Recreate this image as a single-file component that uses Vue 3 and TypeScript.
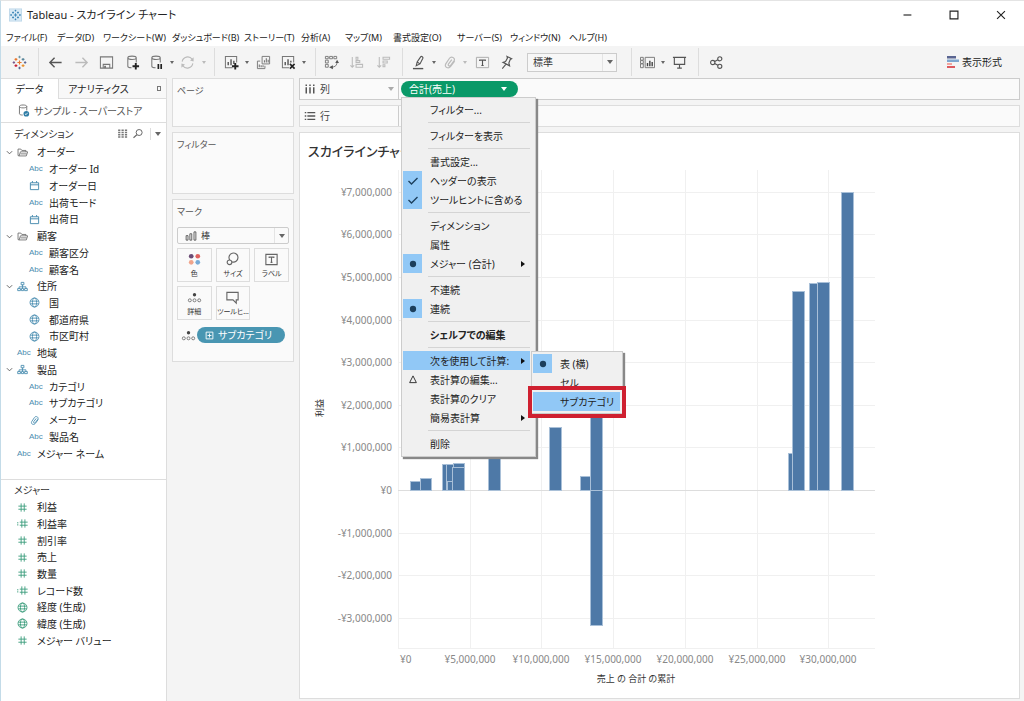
<script setup lang="ts">
import { ref } from 'vue'

interface Field { icon: string; label: string; level: number; open?: boolean }
interface MenuRow { label?: string; sep?: boolean; mark?: string; arrow?: boolean; strong?: boolean; sub?: boolean }
interface Tool { kind: 'btn' | 'caret' | 'div' | 'fit'; icon?: string; label?: string; dim?: boolean }
interface Bar { x: number; w: number; v: number }

const menus = ['ファイル(F)', 'データ(D)', 'ワークシート(W)', 'ダッシュボード(B)', 'ストーリー(T)', '分析(A)', 'マップ(M)', '書式設定(O)', 'サーバー(S)', 'ウィンドウ(N)', 'ヘルプ(H)']

const tools: Tool[] = [
  { kind: 'btn', icon: 'logo', label: 'スタートページ' },
  { kind: 'div' },
  { kind: 'btn', icon: 'back', label: '元に戻す' },
  { kind: 'btn', icon: 'forward', label: 'やり直し', dim: true },
  { kind: 'btn', icon: 'save', label: '保存' },
  { kind: 'btn', icon: 'dbadd', label: '新しいデータソース' },
  { kind: 'btn', icon: 'dbpause', label: '自動更新の一時停止' },
  { kind: 'caret' },
  { kind: 'btn', icon: 'refresh', label: '更新の実行', dim: true },
  { kind: 'caret', dim: true },
  { kind: 'div' },
  { kind: 'btn', icon: 'sheetadd', label: '新しいワークシート' },
  { kind: 'caret' },
  { kind: 'btn', icon: 'copy', label: '複製' },
  { kind: 'btn', icon: 'sheetclear', label: 'シートのクリア' },
  { kind: 'caret' },
  { kind: 'div' },
  { kind: 'btn', icon: 'swap', label: '行と列の交換' },
  { kind: 'btn', icon: 'asc', label: '昇順', dim: true },
  { kind: 'btn', icon: 'desc', label: '降順', dim: true },
  { kind: 'div' },
  { kind: 'btn', icon: 'pen', label: 'ハイライト' },
  { kind: 'caret' },
  { kind: 'btn', icon: 'clip', label: 'グループ', dim: true },
  { kind: 'caret', dim: true },
  { kind: 'btn', icon: 'text', label: 'マークラベル' },
  { kind: 'btn', icon: 'pin', label: '軸の固定' },
  { kind: 'fit' },
  { kind: 'div' },
  { kind: 'btn', icon: 'cards', label: 'カードの表示' },
  { kind: 'caret' },
  { kind: 'btn', icon: 'present', label: 'プレゼンテーション' },
  { kind: 'div' },
  { kind: 'btn', icon: 'share', label: '共有' },
]

const dimensions: Field[] = [
  { icon: 'folder', label: 'オーダー', level: 0, open: true },
  { icon: 'abc', label: 'オーダー Id', level: 1 },
  { icon: 'date', label: 'オーダー日', level: 1 },
  { icon: 'abc', label: '出荷モード', level: 1 },
  { icon: 'date', label: '出荷日', level: 1 },
  { icon: 'folder', label: '顧客', level: 0, open: true },
  { icon: 'abc', label: '顧客区分', level: 1 },
  { icon: 'abc', label: '顧客名', level: 1 },
  { icon: 'tree', label: '住所', level: 0, open: true },
  { icon: 'globe', label: '国', level: 1 },
  { icon: 'globe', label: '都道府県', level: 1 },
  { icon: 'globe', label: '市区町村', level: 1 },
  { icon: 'abc', label: '地域', level: 0 },
  { icon: 'tree', label: '製品', level: 0, open: true },
  { icon: 'abc', label: 'カテゴリ', level: 1 },
  { icon: 'abc', label: 'サブカテゴリ', level: 1 },
  { icon: 'clip', label: 'メーカー', level: 1 },
  { icon: 'abc', label: '製品名', level: 1 },
  { icon: 'abc', label: 'メジャー ネーム', level: 0 },
]

const measures: Field[] = [
  { icon: 'hash', label: '利益', level: 0 },
  { icon: 'calc', label: '利益率', level: 0 },
  { icon: 'hash', label: '割引率', level: 0 },
  { icon: 'hash', label: '売上', level: 0 },
  { icon: 'hash', label: '数量', level: 0 },
  { icon: 'calc', label: 'レコード数', level: 0 },
  { icon: 'globe', label: '経度 (生成)', level: 0 },
  { icon: 'globe', label: '緯度 (生成)', level: 0 },
  { icon: 'hash', label: 'メジャー バリュー', level: 0 },
]

const markButtons = [
  { icon: 'color', label: '色' },
  { icon: 'size', label: 'サイズ' },
  { icon: 'label', label: 'ラベル' },
  { icon: 'detail', label: '詳細' },
  { icon: 'tip', label: 'ツールヒ…' },
]

const rows: MenuRow[] = [
  { label: 'フィルター...' }, { sep: true },
  { label: 'フィルターを表示' }, { sep: true },
  { label: '書式設定...' },
  { label: 'ヘッダーの表示', mark: 'check' },
  { label: 'ツールヒントに含める', mark: 'check' }, { sep: true },
  { label: 'ディメンション' },
  { label: '属性' },
  { label: 'メジャー (合計)', mark: 'dot', arrow: true }, { sep: true },
  { label: '不連続' },
  { label: '連続', mark: 'dot' }, { sep: true },
  { label: 'シェルフでの編集', strong: true }, { sep: true },
  { label: '次を使用して計算:', arrow: true, sub: true },
  { label: '表計算の編集...', mark: 'delta' },
  { label: '表計算のクリア' },
  { label: '簡易表計算', arrow: true }, { sep: true },
  { label: '削除' },
]

const fit = ref('標準')
const markType = ref('棒')

/* Chart scale: sales and profit in millions of yen */
const left = 90
const zero = 326
const perX = 14.34
const perY = 42.6
const px = (m: number) => Math.round(left + m * perX)
const py = (m: number) => Math.round(zero - m * perY)
const yen = (m: number) => (m < 0 ? '-' : '') + '¥' + (m === 0 ? '0' : Math.abs(m) + ',000,000')
const xTicks = [0, 5, 10, 15, 20, 25, 30]
const yTicks = [7, 6, 5, 4, 3, 2, 1, 0, -1, -2, -3]
const bars: Bar[] = [
  { x: 0.87, w: 0.8, v: 0.22 },
  { x: 1.5, w: 0.8, v: 0.28 },
  { x: 3.05, w: 0.8, v: 0.61 },
  { x: 3.35, w: 0.8, v: 0.61 },
  { x: 3.83, w: 0.8, v: 0.64 },
  { x: 3.41, w: 0.8, v: 0.22 },
  { x: 3.75, w: 0.84, v: 0.53 },
  { x: 6.27, w: 0.84, v: 1.2 },
  { x: 10.5, w: 0.84, v: 1.49 },
  { x: 12.7, w: 0.8, v: 0.34 },
  { x: 13.36, w: 0.84, v: 1.85 },
  { x: 13.42, w: 0.84, v: -3.18 },
  { x: 27.22, w: 0.8, v: 0.86 },
  { x: 27.45, w: 0.84, v: 4.67 },
  { x: 28.66, w: 0.84, v: 4.86 },
  { x: 29.22, w: 0.84, v: 4.89 },
  { x: 30.9, w: 0.84, v: 7 },
]
</script>

<template>
  <div class="app">
    <svg class="defs" aria-hidden="true">
      <symbol id="i-logo" viewBox="0 0 16 16">
        <g fill="none" stroke-width="1.2">
          <path stroke="#e8762c" d="M8 5.8v4.4M5.8 8h4.4" />
          <path stroke="#c72037" d="M4.2 9.8v3M2.7 11.3h3" />
          <path stroke="#eb912c" d="M11.8 9.8v3M10.3 11.3h3" />
          <path stroke="#59879b" d="M11.8 3.2v3M10.3 4.7h3" />
          <path stroke="#e8762c" d="M4.2 3.2v3M2.7 4.7h3" />
          <path stroke="#7099a6" d="M8 .8v2.6M6.7 2.1h2.6" />
          <path stroke="#5b6591" d="M8 12.6v2.6M6.7 13.9h2.6M14 6.7v2.6M12.7 8h2.6" />
          <path stroke="#7b5a8c" d="M2 6.7v2.6M.7 8h2.6" />
        </g>
      </symbol>
      <symbol id="i-app" viewBox="0 0 16 16">
        <rect x=".5" y=".5" width="15" height="15" fill="#d9eaf5" stroke="#b9d5e8" />
        <path stroke="#3f88b8" stroke-width="1.2" d="M8 6v4M6 8h4M5 9.8v2.4M3.8 11h2.4M11 9.8v2.4M9.8 11h2.4M11 3.8v2.4M9.8 5h2.4M5 3.8v2.4M3.8 5h2.4M8 1.6v2M7 2.6h2M8 12.4v2M7 13.4h2M13.4 7v2M12.4 8h2M2.6 7v2M1.6 8h2" />
      </symbol>
      <symbol id="i-back" viewBox="0 0 16 16"><path fill="none" stroke="#555" stroke-width="1.5" d="M14.5 8H2M7 3 2 8l5 5" /></symbol>
      <symbol id="i-forward" viewBox="0 0 16 16"><path fill="none" stroke="currentColor" stroke-width="1.5" d="M1.5 8H14M9 3l5 5-5 5" /></symbol>
      <symbol id="i-save" viewBox="0 0 16 16"><path fill="none" stroke="currentColor" stroke-width="1.1" d="M1.5 2h13v12h-13zM4.500 14v-4h7v4" /><path fill="currentColor" d="M5.500 11.500h2V14h-2z" /></symbol>
      <symbol id="i-dbadd" viewBox="0 0 16 16"><path fill="none" stroke="currentColor" stroke-width="1.1" d="M3 3v9c0 1 1.800 1.600 4 1.600M3 3c0-1 1.800-1.800 4.500-1.800S12 2 12 3s-1.800 1.800-4.500 1.800S3 4 3 3M12 3v5" /><path stroke="#222" stroke-width="2" d="M11.500 8.500v7M8 12h7" /></symbol>
      <symbol id="i-dbpause" viewBox="0 0 16 16"><path fill="none" stroke="currentColor" stroke-width="1.1" d="M3 3v9c0 1 1.800 1.600 4 1.600M3 3c0-1 1.800-1.800 4.500-1.800S12 2 12 3s-1.800 1.800-4.500 1.800S3 4 3 3M12 3v5" /><path stroke="#222" stroke-width="1.8" d="M10 9.500V15M13 9.500V15" /></symbol>
      <symbol id="i-refresh" viewBox="0 0 16 16"><path fill="none" stroke="currentColor" stroke-width="1.2" d="M2.300 7A6 6 0 0 1 13 4.500M13.700 9A6 6 0 0 1 3 11.500" /><path fill="currentColor" d="M14.500 2.500V7l-3.800-1.200zM1.500 13.500V9l3.800 1.200z" /></symbol>
      <symbol id="i-sheetadd" viewBox="0 0 16 16"><path fill="none" stroke="currentColor" stroke-width="1.1" d="M9 13.500H1.500v-12h12V8" /><path stroke="#555" stroke-width="1.5" d="M4.500 11V7.500M7.500 11V4.500M10.500 9.500V6" /><path stroke="#222" stroke-width="2" d="M12 8.500v7M8.500 12h7" /></symbol>
      <symbol id="i-copy" viewBox="0 0 16 16"><path fill="none" stroke="currentColor" d="M6.500 1.500h8v8h-8zM4.500 6.500h-3v8h8v-3" /><path stroke="currentColor" stroke-width="1.2" d="M9 8V5.500M11 8V3.500M13 8V5M3.500 13v-3M5.500 13v-2M7.500 13v-2" /></symbol>
      <symbol id="i-sheetclear" viewBox="0 0 16 16"><path fill="none" stroke="currentColor" stroke-width="1.1" d="M8.500 13.500h-7v-12h12V8" /><path stroke="#555" stroke-width="1.5" d="M4.500 11V7.500M7.500 11V4.500M10.500 8V6" /><path stroke="#222" stroke-width="1.8" d="m9.500 9.500 5 5M14.500 9.500l-5 5" /></symbol>
      <symbol id="i-swap" viewBox="0 0 16 16"><path fill="none" stroke="currentColor" d="M1.500 1.500h3v2.500h-3zM6 1.500h3v2.500H6zM10.500 1.500h3v2.500h-3zM1.500 5.500h3v3h-3zM1.500 10h3v3h-3zM14 7c0 4-2 6-6 6" /><path fill="#555" d="M14 5 16 8.500h-4zM5.500 13l4-2.200v4.400z" /></symbol>
      <symbol id="i-asc" viewBox="0 0 16 16"><path fill="none" stroke="currentColor" stroke-width="1.1" d="M3.500 2v11M1.500 11l2 2 2-2M7.500 2.500h2v2h-2zM7.500 6h4v2h-4zM7.500 10h7v3h-7z" /></symbol>
      <symbol id="i-desc" viewBox="0 0 16 16"><path fill="none" stroke="currentColor" stroke-width="1.1" d="M3.500 2v11M1.500 11l2 2 2-2M7.500 2.500h7v2h-7zM7.500 6.500H12v2H7.500zM7.500 10.500h2v2h-2z" /></symbol>
      <symbol id="i-pen" viewBox="0 0 16 16"><path fill="none" stroke="#555" stroke-width="1.2" d="M4.500 11.500 5.500 7.500l3.700-5.500c.9-1.200 3 .1 2.400 1.500L8.500 9.500zM5.500 7.500l3 2" /><path stroke="#555" stroke-width="1.5" d="M1 14.500h11" /></symbol>
      <symbol id="i-clip" viewBox="0 0 16 16"><path fill="none" stroke="currentColor" stroke-width="1.3" d="M13.500 6.500 9 12.500c-2 2.500-7 .8-5-3L8 3.500c1.800-2.700 6.500-.5 5 2.500L9 11.200c-1.200 1.300-3 0-2.200-1.500L10.500 5" /></symbol>
      <symbol id="i-text" viewBox="0 0 16 16"><path fill="none" stroke="#aaa" d="M1.500 2.500h13v11h-13z" /><path fill="none" stroke="#555" stroke-width="1.2" d="M5 6.500v-1h6v1M8 5.500v6M6.800 11.200h2.400" /></symbol>
      <symbol id="i-pin" viewBox="0 0 16 16"><path fill="none" stroke="#555" stroke-width="1.2" d="m8.500 1.500 5 2.500-1.500.8-1.500 3.700.8 3-7-3.700L7 7l2-3.700zM7.500 9.800 3.500 14.500" /></symbol>
      <symbol id="i-cards" viewBox="0 0 16 16"><path fill="none" stroke="currentColor" d="M.5 2.500h3v3h-3zM.5 6h3v3h-3zM.5 9.500h3v4h-3zM5.500 2.500h10v11h-10z" /><path stroke="#444" stroke-width="1.5" d="M8 12V8.500M10.500 12V6M13 12V7.500" /></symbol>
      <symbol id="i-present" viewBox="0 0 16 16"><path fill="none" stroke="#555" stroke-width="1.2" d="M1 2.500h14M2.500 3v7h11V3M8 10v4M5.500 14h5" /></symbol>
      <symbol id="i-share" viewBox="0 0 16 16"><g fill="none" stroke="#555" stroke-width="1.2"><circle cx="4" cy="8" r="2.300" /><circle cx="11.500" cy="4" r="2.200" /><circle cx="11.500" cy="12" r="2.200" /><path d="m6 7 3.500-2M6 9l3.500 2" /></g></symbol>
      <symbol id="i-showme" viewBox="0 0 16 16"><path fill="#5a6591" d="M2 2h9v2.500H2z" /><path fill="#7fa6cf" d="M2 5.500h12V8H2z" /><path fill="#f3a6a0" d="M2 9h5v2H2z" /><path fill="#dd5a5f" d="M2 12h8v2H2z" /></symbol>
      <symbol id="i-source" viewBox="0 0 16 16"><path fill="none" stroke="#777" stroke-width="1.2" d="M3 3v9c0 1 1.800 1.600 4 1.600M3 3c0-1 1.800-1.800 4.500-1.800S12 2 12 3s-1.800 1.800-4.500 1.800S3 4 3 3M12 3v5" /><circle cx="11.500" cy="12" r="3.500" fill="#2f7da6" /><path fill="none" stroke="#fff" d="m9.800 12 1.300 1.200 2-2.400" /></symbol>
      <symbol id="i-grid" viewBox="0 0 16 16"><path fill="none" stroke="#777" stroke-width="1.8" stroke-dasharray="3 1.5" d="M1.500 3H15M1.500 6H15M1.500 9H15M1.500 12H15" /></symbol>
      <symbol id="i-find" viewBox="0 0 16 16"><circle cx="9.500" cy="6" r="4" fill="none" stroke="#666" stroke-width="1.3" /><path stroke="#666" stroke-width="1.5" d="m6.500 9-4.500 4" /></symbol>
      <symbol id="i-folder" viewBox="0 0 16 16"><path fill="none" stroke="#666" stroke-width="1.2" d="M3 13 1.500 12.500V3h4L7 5h6v2M3 13l2-6h10.500l-2 6zM5 10h9" /></symbol>
      <symbol id="i-date" viewBox="0 0 16 16"><path fill="none" stroke="currentColor" stroke-width="1.4" d="M2 4h12v10H2zM2 7h12M5 1.500V4M11 1.500V4" /></symbol>
      <symbol id="i-tree" viewBox="0 0 16 16"><path fill="none" stroke="currentColor" stroke-width="1.3" d="M6 2h4v3.500H6zM1 11h4v3H1zM6.500 11h3v3h-3zM11 11h4v3h-4zM8 5.500V11M3 11V8.500h10V11" /></symbol>
      <symbol id="i-globe" viewBox="0 0 16 16"><g fill="none" stroke="currentColor" stroke-width="1.3"><circle cx="8" cy="8" r="6.500" /><ellipse cx="8" cy="8" rx="3" ry="6.500" /><path d="M2 6h12M2 10h12" /></g></symbol>
      <symbol id="i-hash" viewBox="0 0 16 16"><path fill="none" stroke="currentColor" stroke-width="1.3" d="M6 2v12M10.500 2v12M2 6h12M2 10.500h12" /></symbol>
      <symbol id="i-calc" viewBox="0 0 16 16"><path fill="none" stroke="currentColor" stroke-width="1.3" d="M7 2v12M11.500 2v12M4 6h11.500M4 10.500h11.500M0 7h2M0 10h2" /></symbol>
      <symbol id="i-color" viewBox="0 0 16 16"><circle cx="4.500" cy="4.500" r="2.500" fill="#6b4c75" /><circle cx="11.500" cy="4.500" r="2.500" fill="#e0625f" /><circle cx="4.500" cy="11" r="2.500" fill="#f0a48b" /><circle cx="11.500" cy="11" r="2.500" fill="#79abd6" /></symbol>
      <symbol id="i-size" viewBox="0 0 16 16"><g fill="none" stroke="#666" stroke-width="1.2"><path d="M5 8.500a4.800 4.800 0 1 1 2.600 2" /><circle cx="4.800" cy="11" r="2.500" /></g></symbol>
      <symbol id="i-label" viewBox="0 0 16 16"><path fill="none" stroke="#666" stroke-width="1.2" d="M2 2.500h12v11H2zM5.500 6.500v-1h5v1M8 5.500V11M7 11h2" /></symbol>
      <symbol id="i-detail" viewBox="0 0 16 16"><circle cx="8" cy="5" r="1.8" fill="#444" /><g fill="none" stroke="#777"><circle cx="3" cy="11" r="1.600" /><circle cx="8" cy="11" r="1.600" /><circle cx="13" cy="11" r="1.600" /></g></symbol>
      <symbol id="i-tip" viewBox="0 0 16 16"><path fill="none" stroke="#666" stroke-width="1.2" d="M2 2.500h12v8h-2V14l-3.500-3.500H2z" /></symbol>
      <symbol id="i-cols" viewBox="0 0 16 16"><path stroke="#555" stroke-width="2" stroke-dasharray="2 1.5 20" d="M3 2v12M8 2v12M13 2v12" /></symbol>
      <symbol id="i-rows" viewBox="0 0 16 16"><path stroke="#555" stroke-width="1.8" stroke-dasharray="2 1.5 20" d="M1 3.500h14M1 8h14M1 12.500h14" /></symbol>
      <symbol id="i-bars" viewBox="0 0 16 16"><path fill="none" stroke="#555" stroke-width="1.2" d="M1.500 7.500H4v6H1.500zM6.500 5H9v8.500H6.500zM12 2.500h2.500v11H12z" /></symbol>
      <symbol id="i-plus" viewBox="0 0 16 16"><path fill="none" stroke="currentColor" stroke-width="1.6" d="M2 2h12v12H2zM8 4.500v7M4.500 8h7" /></symbol>
      <symbol id="i-check" viewBox="0 0 16 16"><path fill="none" stroke="#1c3f5c" stroke-width="1.8" d="m2 8 4 4 8-8" /></symbol>
      <symbol id="i-dot" viewBox="0 0 16 16"><circle cx="8" cy="8" r="4.200" fill="#1c3f5c" /></symbol>
      <symbol id="i-delta" viewBox="0 0 16 16"><path fill="none" stroke="#333" stroke-width="1.3" d="M8 2.500 12.500 11.500h-9z" /></symbol>
      <symbol id="i-min" viewBox="0 0 16 16"><path stroke="#222" stroke-width="1.3" d="M4 8h9" /></symbol>
      <symbol id="i-max" viewBox="0 0 16 16"><path fill="none" stroke="#222" stroke-width="1.3" d="M3.500 3.500h9v9h-9z" /></symbol>
      <symbol id="i-close" viewBox="0 0 16 16"><path stroke="#222" stroke-width="1.3" d="m3.500 3.500 9 9M12.500 3.500l-9 9" /></symbol>
    </svg>

    <header class="titlebar">
      <svg class="appicon"><use href="#i-app" /></svg>
      <h1>Tableau - スカイライン チャート</h1>
      <div class="winbtns">
        <button aria-label="最小化"><svg class="ic"><use href="#i-min" /></svg></button>
        <button aria-label="最大化"><svg class="ic"><use href="#i-max" /></svg></button>
        <button aria-label="閉じる"><svg class="ic"><use href="#i-close" /></svg></button>
      </div>
    </header>

    <nav class="menubar">
      <button v-for="m in menus" :key="m">{{ m }}</button>
    </nav>

    <div class="toolbar">
      <template v-for="(t, i) in tools" :key="i">
        <button v-if="t.kind === 'btn'" class="tool" :class="{ dim: t.dim }" :aria-label="t.label"><svg class="ic"><use :href="'#i-' + t.icon" /></svg></button>
        <button v-else-if="t.kind === 'caret'" class="tool" :class="{ dim: t.dim }" aria-label="オプション"><i class="caret small"></i></button>
        <span v-else-if="t.kind === 'div'" class="divider"></span>
        <div v-else class="select fit">
          <select v-model="fit" aria-label="サイズ"><option>標準</option></select>
          <span class="drop"><i class="caret"></i></span>
        </div>
      </template>
      <button class="showme"><svg class="ic"><use href="#i-showme" /></svg>表示形式</button>
    </div>

    <div class="body">
      <aside class="data">
        <div class="tabs">
          <button class="tab on">データ</button>
          <button class="tab">アナリティクス<span class="updown"></span></button>
        </div>
        <button class="source"><svg class="ic"><use href="#i-source" /></svg>サンプル - スーパーストア</button>
        <section class="dims">
          <header>
            <h2>ディメンション</h2>
            <button aria-label="データの表示"><svg class="ic sm"><use href="#i-grid" /></svg></button>
            <button aria-label="フィールドの検索"><svg class="ic sm"><use href="#i-find" /></svg></button>
            <button class="more" aria-label="メニュー"><i class="caret"></i></button>
          </header>
          <ul>
            <li v-for="f in dimensions" :key="f.label" :class="{ nested: f.level }">
              <span class="twist"><button v-if="f.open" aria-label="折りたたむ"><svg viewBox="0 0 8 8"><path d="M1 2.500 4 5.500 7 2.500" /></svg></button></span>
              <span v-if="f.icon === 'abc'" class="abc">Abc</span>
              <svg v-else class="ic"><use :href="'#i-' + f.icon" /></svg>
              <span class="name">{{ f.label }}</span>
            </li>
          </ul>
        </section>
        <section class="meas">
          <header><h2>メジャー</h2></header>
          <ul>
            <li v-for="f in measures" :key="f.label">
              <span class="twist"></span>
              <svg class="ic"><use :href="'#i-' + f.icon" /></svg>
              <span class="name">{{ f.label }}</span>
            </li>
          </ul>
        </section>
      </aside>

      <div class="cards">
        <section class="card pages"><h3>ページ</h3></section>
        <section class="card filters"><h3>フィルター</h3></section>
        <section class="card marks">
          <h3>マーク</h3>
          <div class="select mark">
            <svg class="ic sm"><use href="#i-bars" /></svg>
            <select v-model="markType" aria-label="マークの種類"><option>棒</option></select>
            <span class="drop"><i class="caret"></i></span>
          </div>
          <div class="markgrid">
            <button v-for="b in markButtons" :key="b.label"><svg class="ic"><use :href="'#i-' + b.icon" /></svg>{{ b.label }}</button>
          </div>
          <div class="enc">
            <svg class="ic"><use href="#i-detail" /></svg>
            <button class="pill blue"><svg><use href="#i-plus" /></svg>サブカテゴリ</button>
          </div>
        </section>
      </div>

      <main>
        <div class="shelf cols">
          <div class="shelfname"><svg class="ic sm"><use href="#i-cols" /></svg>列<i class="caret faint"></i></div>
          <div class="anchor">
            <button class="pill green" aria-haspopup="menu">合計(売上)<i class="caret"></i></button>
            <div class="menu" role="menu">
              <template v-for="(r, i) in rows" :key="i">
                <hr v-if="r.sep">
                <div v-else class="slot">
                  <button class="row" :class="{ strong: r.strong, lit: r.sub }" role="menuitem">
                    <span class="gutter" :class="{ on: r.mark && r.mark !== 'delta' }"><svg v-if="r.mark"><use :href="'#i-' + r.mark" /></svg></span>
                    {{ r.label }}
                    <i v-if="r.arrow" class="arrow"></i>
                  </button>
                  <div v-if="r.sub" class="menu submenu" role="menu">
                    <button class="row" role="menuitem"><span class="gutter on"><svg><use href="#i-dot" /></svg></span>表 (横)</button>
                    <button class="row" role="menuitem"><span class="gutter"></span>セル</button>
                    <div class="slot">
                      <button class="row lit" role="menuitem"><span class="gutter"></span>サブカテゴリ</button>
                      <span class="frame"></span>
                    </div>
                  </div>
                </div>
              </template>
            </div>
          </div>
        </div>
        <div class="shelf">
          <div class="shelfname"><svg class="ic sm"><use href="#i-rows" /></svg>行</div>
        </div>
        <section class="view">
          <h2>スカイラインチャート</h2>
          <svg class="chart" width="576" height="526" role="img" aria-label="利益と売上の合計の累計">
            <g class="grid">
              <line v-for="t in xTicks" :key="'x' + t" :x1="px(t)" :x2="px(t)" y1="6" y2="484" />
              <line v-for="t in yTicks" :key="'y' + t" :x1="left" x2="567" :y1="py(t)" :y2="py(t)" :class="{ base: t === 0 }" />
              <line :x1="left" x2="567" y1="484" y2="484" />
            </g>
            <rect v-for="(b, i) in bars" :key="i" class="bar" :x="px(b.x)" :y="Math.min(py(b.v), zero)" :width="Math.round(b.w * perX)" :height="Math.abs(py(b.v) - zero)" />
            <g class="axis">
              <text v-for="t in yTicks" :key="'ly' + t" x="84" :y="py(t) + 4" text-anchor="end">{{ yen(t) }}</text>
              <text v-for="t in xTicks" :key="'lx' + t" :x="t === 0 ? left + 2 : px(t)" y="499" :text-anchor="t === 0 ? 'start' : 'middle'">{{ yen(t) }}</text>
            </g>
            <g class="axistitle">
              <text x="328" y="518" text-anchor="middle">売上 の 合計 の累計</text>
              <text transform="translate(15 244) rotate(-90)" text-anchor="middle">利益</text>
            </g>
          </svg>
        </section>
      </main>
    </div>
  </div>
</template>

<style>
body { margin: 0; }
</style>

<style scoped>
.app {
  min-height: 100vh;
  box-sizing: border-box;
  display: flex;
  flex-direction: column;
  border-top: 1px solid #e4e4e4;
  border-left: 1px solid #c3dbe8;
  background: #f4f4f4;
  color: #333;
  font: 10px/14px "Noto Sans", "Noto Sans CJK JP", sans-serif;
  font-feature-settings: "palt";
  overflow: hidden;
}
.app *, .app *::before { box-sizing: border-box; }
.defs { position: absolute; width: 0; height: 0; }
button, select { font: inherit; font-feature-settings: inherit; color: inherit; background: none; border: 0; padding: 0; margin: 0; white-space: nowrap; }
select { appearance: none; flex: 1; min-width: 0; height: 100%; }
h1, h2, h3, ul { margin: 0; padding: 0; font-weight: 400; }
svg { display: block; flex: none; }
.ic { width: 16px; height: 16px; }
.ic.sm { width: 12px; height: 12px; }
.caret { flex: none; border: 3px solid transparent; border-top: 4px solid #666; border-bottom: 0; }
.caret.small { border-width: 3px 2px 0; }
.caret.faint { border-top-color: #aaa; }

.titlebar { display: flex; align-items: center; height: 28px; padding-left: 8px; background: #fff; }
.appicon { width: 13px; height: 14px; }
.titlebar h1 { flex: 1; padding-left: 5px; font-size: 11px; color: #222; }
.winbtns { display: flex; }
.winbtns button { width: 47px; height: 28px; display: grid; place-items: center; }
.winbtns .ic { width: 14px; height: 14px; }

.menubar { display: grid; grid-template-columns: 51px 46px 69px 72px 57px 44px 48px 64px 53px 59px 60px; height: 17px; padding-left: 5px; background: #fff; font-size: 9px; color: #222; }
.menubar button { text-align: left; }

.toolbar {
  display: grid;
  grid-template-columns: 32px 6px 29px 23px 27px 24px 24px 8px 23px 10px 10px 24px 8px 25px 24px 8px 14px 19px 30px 25px 12px 22px 8px 22px 10px 25px 22px 110px 8px 25px 6px 26px 12px 24px 1fr;
  height: 32px;
  padding: 0 22px 0 2px;
  color: #777;
}
.tool { display: flex; align-items: center; justify-content: center; min-width: 0; }
.tool .ic { width: 15px; height: 15px; }
.dim { color: #bbb; }
.dim .caret { border-top-color: #bbb; }
.divider { justify-self: center; width: 1px; background: #ddd; margin: 2px 0; }
.select { display: flex; align-items: center; border: 1px solid #ccc; background: #fafafa; color: #333; }
.drop { display: grid; place-items: center; width: 14px; align-self: stretch; border-left: 1px solid #e4e4e4; }
.fit { align-self: center; justify-self: center; width: 90px; height: 19px; padding-left: 5px; background: #f7f7f7; }
.showme { display: flex; align-items: center; gap: 1px; justify-self: end; color: #222; }

.body { flex: 1; display: grid; grid-template-columns: 166px 122px 1fr; column-gap: 5px; padding-right: 4px; }
.data { background: #fff; border-right: 1px solid #ddd; color: #333; display: flex; flex-direction: column; }
.tabs { display: flex; height: 21px; }
.tab { width: 57px; border-top: 1px solid #ddd; color: #222; }
.tab:not(.on) { flex: 1; display: flex; align-items: center; justify-content: space-between; padding: 0 5px 0 9px; background: #f8f8f8; border-left: 1px solid #ddd; border-bottom: 1px solid #ddd; }
.updown { width: 4px; height: 5px; border: 1px solid #777; }
.source { display: flex; align-items: center; gap: 4px; height: 24px; padding-left: 16px; border-bottom: 1px solid #ddd; color: #555; }
.source .ic { width: 13px; height: 13px; }
.dims { height: 357px; border-bottom: 1px solid #ddd; }
.data header { display: flex; align-items: center; height: 21px; padding: 0 5px 0 13px; gap: 3px; }
.data header h2 { flex: 1; font-size: 10px; }
.more { display: grid; place-items: center; height: 12px; padding-left: 4px; margin-left: 3px; border-left: 1px solid #ddd; }
.data ul { display: grid; grid-auto-rows: 1fr; height: 318px; list-style: none; }
.data .meas header { height: 19px; }
.data .meas ul { height: 150px; }
.data li { display: grid; grid-template-columns: 16px 12px 1fr; align-items: center; color: #4a8db0; }
.data li.nested { grid-template-columns: 28px 12px 1fr; }
.data li .ic { width: 11px; height: 11px; }
.data .meas li { color: #3a9c7c; }
.name { padding-left: 8px; color: #222; white-space: nowrap; }
.twist { display: flex; padding-left: 5px; }
.twist svg { width: 7px; height: 7px; }
.twist path { fill: none; stroke: #555; stroke-width: 1px; }
.abc { font: 8px/12px "Liberation Sans", sans-serif; }

.cards { display: flex; flex-direction: column; gap: 5px; }
.card { background: #fafafa; border: 1px solid #ddd; padding: 5px 4px; }
.card h3 { font-size: 9px; line-height: 14px; color: #555; }
.pages { height: 49px; }
.filters { height: 62px; }
.marks { height: 163px; }
.marks h3 { height: 22px; }
.mark { height: 17px; padding-left: 7px; gap: 4px; border-radius: 2px; font-size: 9px; }
.markgrid { display: grid; grid-template-columns: repeat(3, 1fr); grid-auto-rows: 34px; gap: 4px; padding-top: 4px; }
.markgrid button { display: flex; flex-direction: column; align-items: center; justify-content: center; gap: 2px; border: 1px solid #ddd; font-size: 7px; line-height: 10px; min-width: 0; overflow: hidden; }
.markgrid .ic { width: 15px; height: 15px; }
.enc { display: flex; align-items: center; gap: 1px; padding: 7px 4px 0; }
.enc .ic { width: 15px; height: 15px; }
.pill { display: flex; align-items: center; border-radius: 8px; color: #fff; height: 16px; }
.blue { flex: 1; padding-left: 8px; gap: 4px; background: #4996b2; }
.blue svg { width: 9px; height: 9px; }

main { display: flex; flex-direction: column; gap: 5px; min-width: 0; padding-bottom: 2px; }
.shelf { display: flex; height: 22px; background: #fafafa; border: 1px solid #ddd; }
.cols { border-color: #ccc; }
.shelfname { display: flex; align-items: center; gap: 4px; width: 99px; padding: 0 4px 0 4px; border-right: 1px solid #ccc; color: #444; }
.shelfname .caret { margin-left: auto; }
.anchor { position: relative; padding: 2px; }
.green { width: 117px; justify-content: space-between; padding: 0 11px 0 8px; background: #0a9968; }
.green .caret { border-top-color: #fff; }

.menu { position: absolute; z-index: 2; left: 2px; top: 18px; width: 135px; padding: 2px 5px 3px 1px; background: #f0f0f0; border: 1px solid #ccc; box-shadow: 2px 2px 1px #888; color: #222; }
.menu hr { height: 1px; margin: 3px 0 3px 25px; border: 0; background: #d4d4d4; }
.slot { position: relative; }
.row { display: flex; align-items: center; width: 100%; height: 19px; }
.gutter { display: grid; place-items: center; flex: none; width: 19px; height: 19px; margin-right: 8px; }
.gutter svg { width: 12px; height: 12px; }
.on.gutter, .lit { background: #91c8f6; }
.strong { font-weight: 700; }
.arrow { margin-left: auto; margin-right: 5px; border: 3px solid transparent; border-left: 4px solid #111; border-right: 0; }
.submenu { left: 128px; top: 0; width: 92px; padding: 2px 2px 2px 1px; }
.frame { position: absolute; inset: -6px -6px -7px -5px; border: 4px solid #cf2030; }

.view { flex: 1; background: #fff; border: 1px solid #ddd; padding: 8px 8px 0; }
.view h2 { height: 23px; font-size: 13px; font-weight: 500; line-height: 20px; color: #333; }
.grid line { stroke: #f0f0f0; shape-rendering: crispEdges; }
.grid .base { stroke: #ddd; }
.bar { fill: #4e79a7; stroke: #a9c0d8; stroke-width: 1px; shape-rendering: crispEdges; }
.axis { fill: #888; }
.axistitle { fill: #333; font-size: 9px; }
</style>
